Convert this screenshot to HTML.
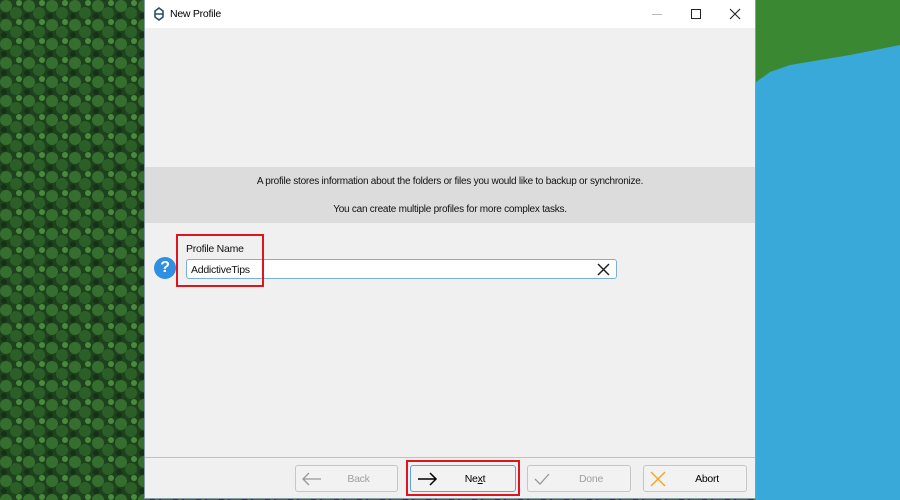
<!DOCTYPE html>
<html><head><style>
*{margin:0;padding:0;box-sizing:border-box}
body{width:900px;height:500px;overflow:hidden;position:relative;font-family:"Liberation Sans",sans-serif;background:#2f5a2b}
#bg{position:absolute;left:0;top:0}
.win{position:absolute;left:144px;top:0;width:612px;height:499px;background:#f0f0f0;border:1px solid #8a9aa8;border-top:none;letter-spacing:-0.25px}
.title{height:28px;background:#fff;position:relative;font-size:10.5px;color:#000}
.title span{position:absolute;left:25px;top:8px}
.band{position:absolute;left:0;right:0;top:167px;height:56px;background:#dcdcdc;font-size:10px;color:#111;text-align:center}
.btn{position:absolute;top:465px;height:27px;border:1px solid #c6c6c6;border-radius:3px;background:#f2f2f2;font-size:10.5px}
.btn span{position:absolute;top:7px;width:100%;text-align:center;left:12px}
</style></head><body>
<svg id="bg" width="900" height="500">
<defs>
<pattern id="f" width="23" height="19" patternUnits="userSpaceOnUse"><rect width="23" height="19" fill="#1e421e"/><circle cx="6" cy="6" r="6" fill="#356e2e"/><circle cx="16" cy="13" r="6" fill="#2b5f27"/><circle cx="19" cy="3" r="3" fill="#4a8a3c"/><circle cx="4" cy="16" r="3" fill="#163216"/></pattern>
</defs>
<rect width="900" height="500" fill="url(#f)"/>
<rect x="756" width="144" height="500" fill="#38a9d8"/>
<polygon points="756,0 900,0 900,45 850,55 820,60 790,65 770,72 756,82" fill="#3a8832"/>
</svg>
<div class="win">
 <div class="title">
  <svg style="position:absolute;left:9px;top:7px" width="10" height="14"><path d="M5 1 L9 4 L9 10 L5 13 L1 10 L1 4 Z" fill="none" stroke="#2a4f6a" stroke-width="1.6"/><path d="M1 7 H9" stroke="#2a4f6a" stroke-width="1.5"/></svg>
  <span>New Profile</span>
  <div style="position:absolute;left:507px;top:14px;width:10px;height:1px;background:#bbb"></div>
  <div style="position:absolute;left:546px;top:9px;width:10px;height:10px;border:1px solid #222"></div>
  <svg style="position:absolute;left:584px;top:8px" width="12" height="12"><path d="M1 1L11 11M11 1L1 11" stroke="#222" stroke-width="1.1"/></svg>
 </div>
 <div class="band"><div style="position:absolute;top:9px;width:100%">A profile stores information about the folders or files you would like to backup or synchronize.</div><div style="position:absolute;top:37px;width:100%">You can create multiple profiles for more complex tasks.</div></div>
 <div style="position:absolute;left:9px;top:257px;width:22px;height:22px;border-radius:50%;background:#2f8fe0;color:#fff;font-weight:bold;font-size:16px;text-align:center;line-height:22px">?</div>
 <div style="position:absolute;left:41px;top:243px;font-size:10.5px;color:#111">Profile Name</div>
 <div style="position:absolute;left:41px;top:259px;width:431px;height:20px;background:#fff;border:1px solid #7aaedb;border-radius:3px;font-size:10.5px;padding:4px 0 0 4px;color:#111">AddictiveTips
  <svg style="position:absolute;right:6px;top:3px" width="13" height="13"><path d="M1 1L12 12M12 1L1 12" stroke="#222" stroke-width="1.5"/></svg></div>
 <div style="position:absolute;left:31px;top:234px;width:88px;height:53px;border:2px solid #e0141e"></div>
 <div style="position:absolute;left:0;right:0;top:457px;height:1px;background:#c0c0c0"></div>
 <div class="btn" style="left:150px;width:103px;color:#a0a0a0"><svg style="position:absolute;left:5px;top:6px" width="22" height="14"><path d="M20 7H2M8 1L2 7L8 13" fill="none" stroke="#999" stroke-width="1.3"/></svg><span>Back</span></div>
 <div class="btn" style="left:265px;width:106px;border-color:#5ea2dc;color:#000"><svg style="position:absolute;left:5px;top:6px" width="22" height="14"><path d="M2 7H20M14 1L20 7L14 13" fill="none" stroke="#000" stroke-width="1.5"/></svg><span>Ne<u>x</u>t</span></div>
 <div style="position:absolute;left:261px;top:460px;width:114px;height:36px;border:2px solid #e0141e"></div>
 <div class="btn" style="left:382px;width:104px;color:#a0a0a0"><svg style="position:absolute;left:5px;top:6px" width="18" height="14"><path d="M2 7L7 12L16 2" fill="none" stroke="#999" stroke-width="1.3"/></svg><span>Done</span></div>
 <div class="btn" style="left:498px;width:104px;color:#000"><svg style="position:absolute;left:6px;top:5px" width="16" height="16"><path d="M1 1L15 15M15 1L1 15" stroke="#f6a623" stroke-width="1.5"/></svg><span>Abort</span></div>
</div>
</body></html>
